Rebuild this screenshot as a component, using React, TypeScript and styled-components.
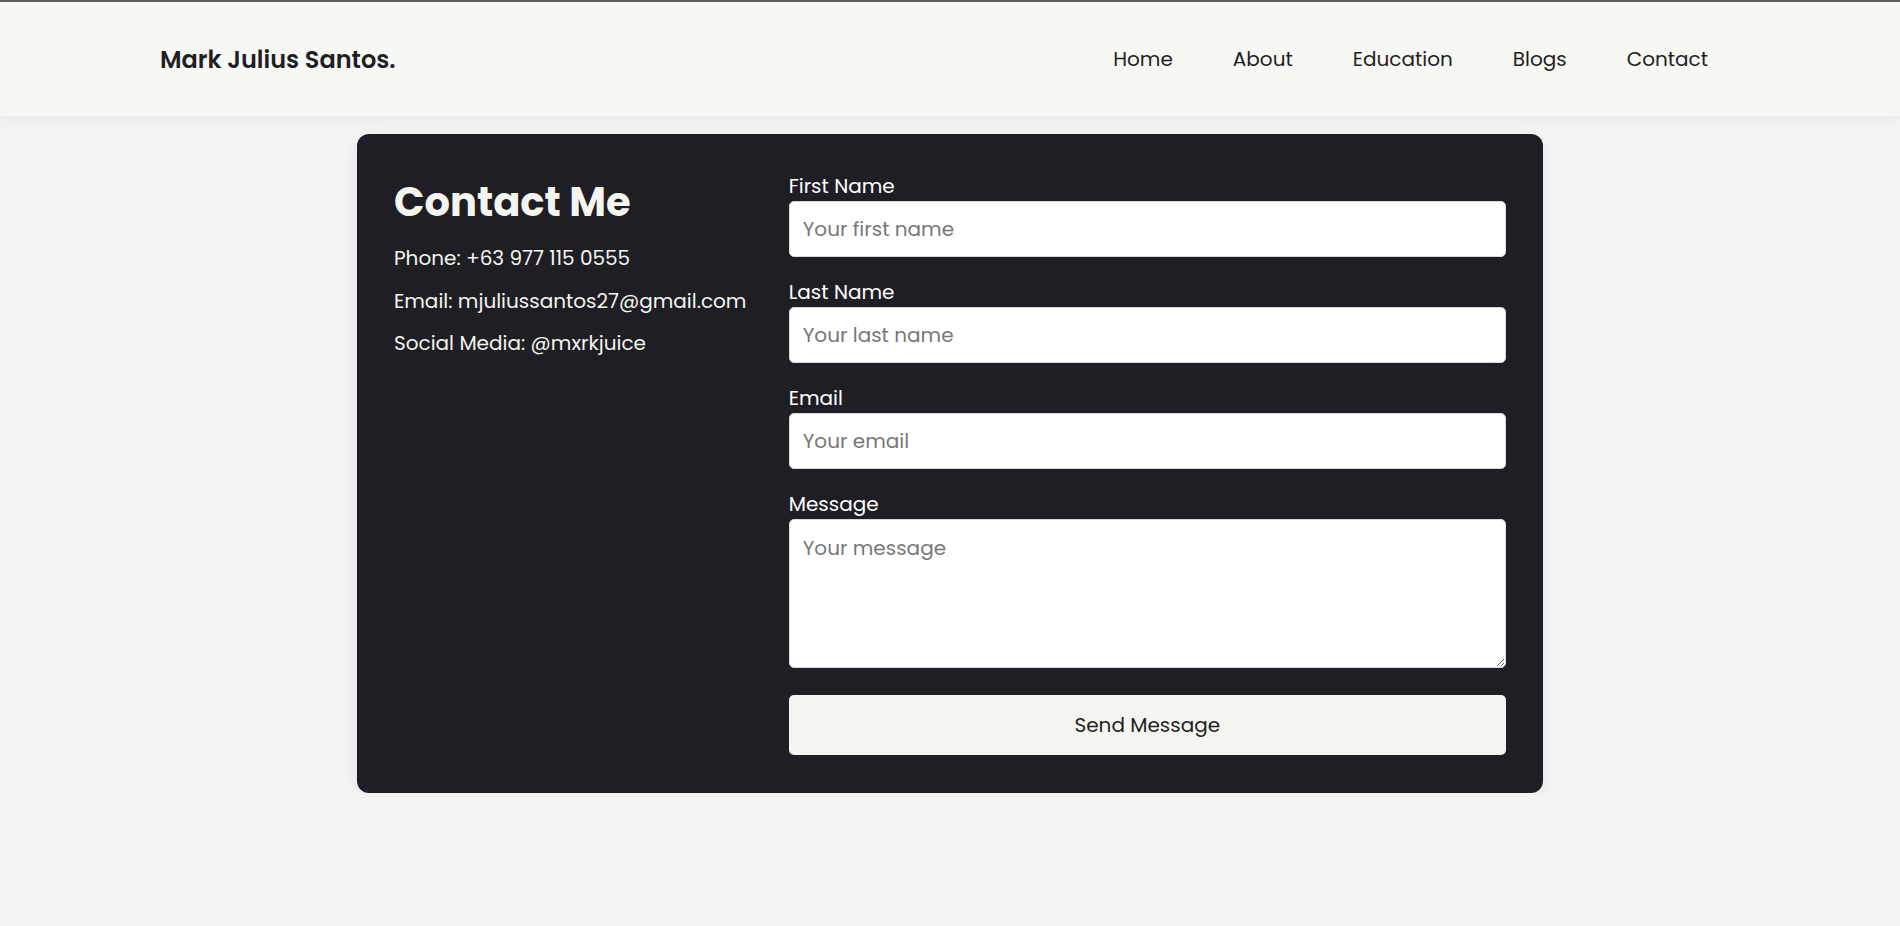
import styled, { createGlobalStyle } from 'styled-components';

const GlobalStyle = createGlobalStyle`
  * {
    box-sizing: border-box;
  }
  body {
    margin: 0;
    background: #f3f3f3;
    font-family: Poppins, Inter, "Noto Sans", sans-serif;
    color: #1f1e24;
  }
`;

const navLinks = ['Home', 'About', 'Education', 'Blogs', 'Contact'];

const fields = [
  { id: 'firstName', label: 'First Name', placeholder: 'Your first name', type: 'text' },
  { id: 'lastName', label: 'Last Name', placeholder: 'Your last name', type: 'text' },
  { id: 'email', label: 'Email', placeholder: 'Your email', type: 'email' },
];

export default function App(): JSX.Element {
  return (
    <>
      <GlobalStyle />
      <Header>
        <Logo href={'#'}>Mark Julius Santos.</Logo>
        <Nav>
          {navLinks.map((link) => (
            <NavLink key={link} href={'#'}>
              {link}
            </NavLink>
          ))}
        </Nav>
      </Header>
      <Main>
        <Card>
          <Info>
            <Title>Contact Me</Title>
            <InfoLine>Phone: +63 977 115 0555</InfoLine>
            <InfoLine>Email: mjuliussantos27@gmail.com</InfoLine>
            <InfoLine>Social Media: @mxrkjuice</InfoLine>
          </Info>
          <Form onSubmit={(e) => e.preventDefault()}>
            {fields.map((f) => (
              <Group key={f.id}>
                <Label htmlFor={f.id}>{f.label}</Label>
                <Input id={f.id} type={f.type} placeholder={f.placeholder} />
              </Group>
            ))}
            <Group $last>
              <Label htmlFor="message">Message</Label>
              <TextArea id="message" placeholder="Your message" />
            </Group>
            <SendButton type="submit">Send Message</SendButton>
          </Form>
        </Card>
      </Main>
    </>
  );
}

const Header = styled.header`
  height: 116px;
  border-top: 2px solid #5f5f5f;
  background: #f7f7f3;
  box-shadow: 0 4px 14px rgba(0, 0, 0, 0.04);
  display: flex;
  align-items: center;
  justify-content: space-between;
  padding: 0 192px 0 160px;
`;

const Logo = styled.a`
  color: #1f1e24;
  text-decoration: none;
  font-weight: 600;
  font-size: 24px;
`;

const Nav = styled.nav`
  display: flex;
  gap: 60px;
`;

const NavLink = styled.a`
  color: #1f1e24;
  text-decoration: none;
  font-size: 20px;
`;

const Main = styled.main`
  display: flex;
  justify-content: center;
  padding-top: 18px;
`;

const Card = styled.section`
  width: 1186px;
  background: #1f1e24;
  border-radius: 12px;
  box-shadow: 0 4px 16px rgba(0, 0, 0, 0.06);
  padding: 37px 37px 38px 37px;
  display: grid;
  grid-template-columns: 1fr 2fr;
  gap: 36px;
`;

const Info = styled.div`
  color: #f5f5f0;
  padding-top: 1px;
`;

const Title = styled.h1`
  margin: 0 0 11px;
  font-size: 40px;
  font-weight: 700;
  line-height: 60px;
`;

const InfoLine = styled.p`
  margin: 0 0 12.5px;
  font-size: 20px;
  line-height: 30px;
`;

const Form = styled.form`
  display: flex;
  flex-direction: column;
`;

const Group = styled.div<{ $last?: boolean }>`
  display: flex;
  flex-direction: column;
  gap: 0;
  margin-bottom: ${(p) => (p.$last ? '27px' : '20px')};
`;

const Label = styled.label`
  color: #ffffff;
  font-size: 20px;
  line-height: 30px;
`;

const fieldStyles = `
  width: 100%;
  border: 1px solid #d9d9d9;
  border-radius: 5px;
  background: #ffffff;
  font-family: Poppins, Inter, "Noto Sans", sans-serif;
  font-size: 20px;
  color: #1f1e24;
  padding: 0 13px;
  outline: none;

  &::placeholder {
    color: #777777;
  }
`;

const Input = styled.input`
  ${fieldStyles}
  height: 56px;
`;

const TextArea = styled.textarea`
  ${fieldStyles}
  display: block;
  height: 149px;
  padding-top: 13px;
  line-height: 30px;
  resize: vertical;
`;

const SendButton = styled.button`
  height: 60px;
  width: 100%;
  border: none;
  border-radius: 5px;
  background: #f5f5f0;
  color: #1f1e24;
  font-family: Poppins, Inter, "Noto Sans", sans-serif;
  font-size: 20px;
  cursor: pointer;
`;
